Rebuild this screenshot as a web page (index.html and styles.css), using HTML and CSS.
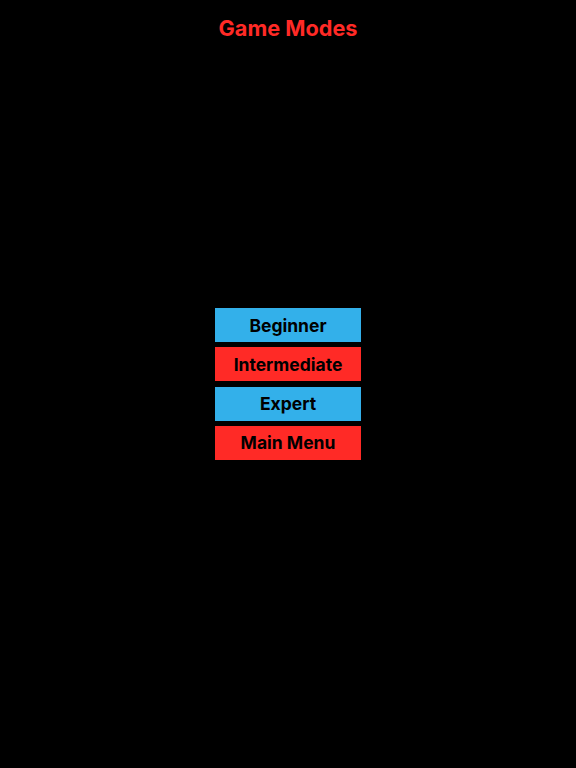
FILE: index.html
```html
<!DOCTYPE html>
<html>
<head>
<meta charset="utf-8">
<link rel="stylesheet" href="styles.css">
</head>
<body>
<div class="screen">
  <h1 class="title">Game Modes</h1>
  <div class="menu">
    <div class="btn blue">Beginner</div>
    <div class="btn red">Intermediate</div>
    <div class="btn blue">Expert</div>
    <div class="btn red">Main Menu</div>
  </div>
</div>
</body>
</html>
```
FILE: styles.css
```css
html, body {
  margin: 0;
  padding: 0;
  background: #000;
}
.screen {
  width: 576px;
  height: 768px;
  display: flex;
  flex-direction: column;
  align-items: center;
  font-family: Inter, "Liberation Sans", sans-serif;
}
.title {
  margin: 14px 0 0 0;
  height: 28px;
  line-height: 28px;
  font-size: 21.7px;
  font-weight: 700;
  color: #ff2a26;
}
.menu {
  margin-top: 266px;
  display: flex;
  flex-direction: column;
  gap: 5.3px;
}
.btn {
  width: 146px;
  height: 34px;
  display: flex;
  align-items: center;
  justify-content: center;
  font-size: 17.5px;
  font-weight: 700;
  color: #000;
}
.blue { background: #33b0ea; }
.red { background: #ff2a26; }
```
